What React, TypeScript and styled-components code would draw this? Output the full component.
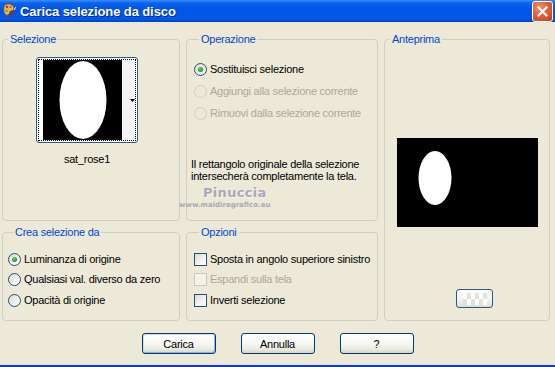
import React from "react";
import styled, { createGlobalStyle } from "styled-components";

const GlobalStyle = createGlobalStyle`
  html, body {
    margin: 0;
    padding: 0;
    background: #ece9d8;
  }
  body {
    font-family: "Liberation Sans", Arial, sans-serif;
    font-size: 11px;
    letter-spacing: -0.25px;
    color: #000;
  }
`;

// window frame

const Window = styled.div`
  position: relative;
  width: 555px;
  height: 367px;
  box-sizing: border-box;
  display: flex;
  flex-direction: column;
  background: #ece9d8;
  border-bottom: 2px solid #0b3ad8;
  overflow: hidden;
`;

const TitleBar = styled.div`
  height: 22px;
  flex: none;
  display: flex;
  align-items: center;
  padding-left: 2px;
  gap: 4px;
  background: linear-gradient(
    180deg,
    #3d8ff5 0%,
    #0a62ec 14%,
    #0055e5 45%,
    #0058ec 85%,
    #0042c9 100%
  );
`;

const Title = styled.span`
  font-family: "Liberation Sans", Arial, sans-serif;
  font-weight: bold;
  font-size: 13px;
  letter-spacing: -0.1px;
  color: #fff;
  text-shadow: 1px 1px 0 #0a2a8c;
`;

const CloseButton = styled.div`
  margin-left: auto;
  margin-right: 2px;
  width: 19px;
  height: 19px;
  border: 1px solid #fff;
  border-radius: 3px;
  display: flex;
  align-items: center;
  justify-content: center;
  background: radial-gradient(circle at 35% 30%, #f0906c 0%, #e0623c 45%, #c13d16 100%);
`;

const Body = styled.div`
  flex: 1;
  display: flex;
  flex-direction: column;
  padding: 11px 0 0 2px;
`;

const Panels = styled.div`
  display: grid;
  grid-template-columns: 178px 192px 166px;
  grid-template-rows: 188px 95px;
  column-gap: 6px;
  row-gap: 5px;
`;

// group boxes

const Group = styled.fieldset<{ $col: number; $row: string; $pad?: number }>`
  margin: 0;
  padding: 0 0 0 ${(p) => p.$pad ?? 0}px;
  min-width: 0;
  box-sizing: border-box;
  border: 1px solid #d0d0bf;
  border-radius: 4px;
  display: flex;
  flex-direction: column;
  grid-column: ${(p) => p.$col};
  grid-row: ${(p) => p.$row};
`;

const Legend = styled.legend`
  margin-left: 5px;
  padding: 0 2px;
  line-height: 13px;
  font-size: 11px;
  color: #0046d5;
`;

// selection thumbnail

const ThumbColumn = styled.div`
  align-self: flex-start;
  margin: 11px 0 0 33px;
  display: flex;
  flex-direction: column;
  align-items: center;
`;

const ThumbFrame = styled.div`
  width: 102px;
  height: 86px;
  box-sizing: border-box;
  border: 1px solid #2b5a87;
  border-radius: 3px;
  padding: 1px;
  background: #fff;
`;

const ThumbFocus = styled.div`
  height: 100%;
  box-sizing: border-box;
  border: 1px dotted #000;
  display: flex;
  padding-left: 4px;
`;

const ThumbStrip = styled.div`
  flex: 1;
  display: flex;
  align-items: center;
  justify-content: flex-end;
  background: #f4f4f4;
`;

const Caption = styled.div`
  margin-top: 10px;
  line-height: 13px;
`;

// options

const OptionList = styled.div<{ $top: number; $row: number }>`
  display: flex;
  flex-direction: column;
  margin-top: ${(p) => p.$top}px;
  & > * {
    height: ${(p) => p.$row}px;
  }
`;

const Option = styled.label<{ $disabled?: boolean }>`
  display: flex;
  align-items: center;
  gap: 3px;
  white-space: nowrap;
  line-height: 13px;
  color: ${(p) => (p.$disabled ? "#aca899" : "#000")};
`;

const Radio = styled.span<{ $checked?: boolean; $disabled?: boolean }>`
  width: 13px;
  height: 13px;
  flex: none;
  box-sizing: border-box;
  border-radius: 50%;
  border: 1px solid ${(p) => (p.$disabled ? "#d2cfc2" : "#1c5180")};
  background: ${(p) =>
    p.$disabled
      ? "#ece9d8"
      : "linear-gradient(135deg, #dcd9cf 0%, #f4f3ee 60%, #ffffff 100%)"};
  display: flex;
  align-items: center;
  justify-content: center;
  &::after {
    content: "";
    display: ${(p) => (p.$checked ? "block" : "none")};
    width: 5px;
    height: 5px;
    border-radius: 50%;
    background: radial-gradient(circle at 40% 35%, #6ad46a 0%, #21a121 60%, #1a8a1a 100%);
  }
`;

const Check = styled.span<{ $disabled?: boolean }>`
  width: 13px;
  height: 13px;
  flex: none;
  box-sizing: border-box;
  border: 1px solid ${(p) => (p.$disabled ? "#cac8bb" : "#1c5180")};
  background: ${(p) =>
    p.$disabled
      ? "#f4f3ea"
      : "linear-gradient(135deg, #dcd9cf 0%, #f4f3ee 60%, #ffffff 100%)"};
`;

const Note = styled.div`
  margin: 34px 0 0 -3px;
  line-height: 12px;
  white-space: nowrap;
`;

// preview

const PreviewBox = styled.div`
  align-self: center;
  margin-top: 92px;
  width: 141px;
  height: 89px;
`;

const SmallButton = styled.div`
  align-self: center;
  margin: 62px 0 0 15px;
  width: 37px;
  height: 19px;
  box-sizing: border-box;
  border: 1px solid #2b5a87;
  border-radius: 3px;
  background: linear-gradient(180deg, #ffffff 0%, #f2f2ee 60%, #dedbd0 100%);
  display: flex;
  align-items: center;
  justify-content: center;
`;

// bottom buttons

const ButtonRow = styled.div`
  margin-top: 12px;
  display: flex;
  justify-content: center;
  gap: 25px;
  padding-right: 2px;
`;

const Button = styled.button<{ $default?: boolean }>`
  width: 74px;
  height: 21px;
  padding: 0;
  font-family: "Liberation Sans", Arial, sans-serif;
  font-size: 11px;
  letter-spacing: -0.25px;
  color: #000;
  border: 1px solid #003c74;
  border-radius: 3px;
  background: linear-gradient(180deg, #ffffff 0%, #f5f5f1 55%, #e8e6dc 85%, #d6d0c5 100%);
  box-shadow: ${(p) => (p.$default ? "inset -1px -1px 0 #8fb0e6, inset 1px 1px 0 #cedcf4" : "none")};
`;

// watermark over the dialog

const Watermark = styled.div`
  position: absolute;
  left: 179px;
  top: 185px;
  display: flex;
  flex-direction: column;
  align-items: flex-start;
  pointer-events: none;
`;

const WatermarkName = styled.span`
  margin-left: 24px;
  font-family: "DejaVu Sans", sans-serif;
  font-weight: bold;
  font-size: 13px;
  letter-spacing: 0.3px;
  line-height: 16px;
  color: #a8a9b8;
  text-shadow: 1px 1px 0 #f6f5ee;
`;

const WatermarkSite = styled.span`
  font-family: "DejaVu Sans", sans-serif;
  font-weight: bold;
  font-size: 7px;
  letter-spacing: 0;
  line-height: 9px;
  color: #a9a9b2;
`;

const AppIcon = () => (
  <svg width="14" height="16" viewBox="0 0 14 16">
    <path d="M2 4 C2 1 7 0 10 2 C13 4 12 8 9 8 C7 8 8 11 6 12 C3 13 1 9 2 4 Z" fill="#f2b24a" stroke="#8a4a12" strokeWidth="0.8" />
    <circle cx="5" cy="4" r="1.2" fill="#d62a1e" />
    <circle cx="8.5" cy="4" r="1.1" fill="#2a7ad6" />
    <circle cx="4.5" cy="8" r="1.1" fill="#2fa83a" />
    <path d="M6 15 L12 6 L13 7 L7.5 15.5 Z" fill="#7a3b10" />
    <path d="M11.5 6.5 L13.5 3.5 L14 4 L12.8 7.3 Z" fill="#d8d8d8" />
  </svg>
);

const CloseIcon = () => (
  <svg width="11" height="11" viewBox="0 0 11 11">
    <path d="M1.5 1.5 L9.5 9.5 M9.5 1.5 L1.5 9.5" stroke="#fff" strokeWidth="2" strokeLinecap="square" />
  </svg>
);

const DropArrow = () => (
  <svg width="5" height="3" viewBox="0 0 5 3">
    <path d="M0 0 H5 L2.5 3 Z" fill="#000" />
  </svg>
);

const ThumbImage = () => (
  <svg width="79" height="80" viewBox="0 0 79 80">
    <rect width="79" height="80" fill="#000" />
    <ellipse cx="40" cy="40" rx="23.5" ry="39" fill="#fff" />
  </svg>
);

const PreviewImage = () => (
  <svg width="141" height="89" viewBox="0 0 141 89">
    <rect width="141" height="89" fill="#000" />
    <ellipse cx="38" cy="40" rx="16.5" ry="27" fill="#fff" />
  </svg>
);

const Checker = () => (
  <svg width="24" height="12" viewBox="0 0 24 12">
    {[0, 1, 2, 3, 4, 5].map((i) =>
      [0, 1].map((j) => (
        <rect
          key={`${i}-${j}`}
          x={i * 4}
          y={j * 6}
          width="4"
          height="6"
          fill={(i + j) % 2 === 0 ? "#ffffff" : "#e2e1dc"}
        />
      ))
    )}
  </svg>
);

const operations = [
  { label: "Sostituisci selezione", checked: true },
  { label: "Aggiungi alla selezione corrente", disabled: true },
  { label: "Rimuovi dalla selezione corrente", disabled: true },
];

const sources = [
  { label: "Luminanza di origine", checked: true },
  { label: "Qualsiasi val. diverso da zero" },
  { label: "Opacità di origine" },
];

const options = [
  { label: "Sposta in angolo superiore sinistro" },
  { label: "Espandi sulla tela", disabled: true },
  { label: "Inverti selezione" },
];

export default function App() {
  return (
    <>
      <GlobalStyle />
      <Window>
        <TitleBar>
          <AppIcon />
          <Title>Carica selezione da disco</Title>
          <CloseButton>
            <CloseIcon />
          </CloseButton>
        </TitleBar>

        <Body>
          <Panels>
            <Group $col={1} $row="1">
              <Legend>Selezione</Legend>
              <ThumbColumn>
                <ThumbFrame>
                  <ThumbFocus>
                    <ThumbImage />
                    <ThumbStrip>
                      <DropArrow />
                    </ThumbStrip>
                  </ThumbFocus>
                </ThumbFrame>
                <Caption>sat_rose1</Caption>
              </ThumbColumn>
            </Group>

            <Group $col={2} $row="1" $pad={7}>
              <Legend>Operazione</Legend>
              <OptionList $top={12} $row={22}>
                {operations.map((o) => (
                  <Option key={o.label} $disabled={o.disabled}>
                    <Radio $checked={o.checked} $disabled={o.disabled} />
                    {o.label}
                  </Option>
                ))}
              </OptionList>
              <Note>
                Il rettangolo originale della selezione
                <br />
                intersecherà completamente la tela.
              </Note>
            </Group>

            <Group $col={3} $row="1 / span 2">
              <Legend>Anteprima</Legend>
              <PreviewBox>
                <PreviewImage />
              </PreviewBox>
              <SmallButton>
                <Checker />
              </SmallButton>
            </Group>

            <Group $col={1} $row="2" $pad={5}>
              <Legend>Crea selezione da</Legend>
              <OptionList $top={10} $row={20.5}>
                {sources.map((o) => (
                  <Option key={o.label}>
                    <Radio $checked={o.checked} />
                    {o.label}
                  </Option>
                ))}
              </OptionList>
            </Group>

            <Group $col={2} $row="2" $pad={7}>
              <Legend>Opzioni</Legend>
              <OptionList $top={10} $row={20.5}>
                {options.map((o) => (
                  <Option key={o.label} $disabled={o.disabled}>
                    <Check $disabled={o.disabled} />
                    {o.label}
                  </Option>
                ))}
              </OptionList>
            </Group>
          </Panels>

          <ButtonRow>
            <Button $default>Carica</Button>
            <Button>Annulla</Button>
            <Button>?</Button>
          </ButtonRow>
        </Body>

        <Watermark>
          <WatermarkName>Pinuccia</WatermarkName>
          <WatermarkSite>www.maidiregrafico.eu</WatermarkSite>
        </Watermark>
      </Window>
    </>
  );
}
